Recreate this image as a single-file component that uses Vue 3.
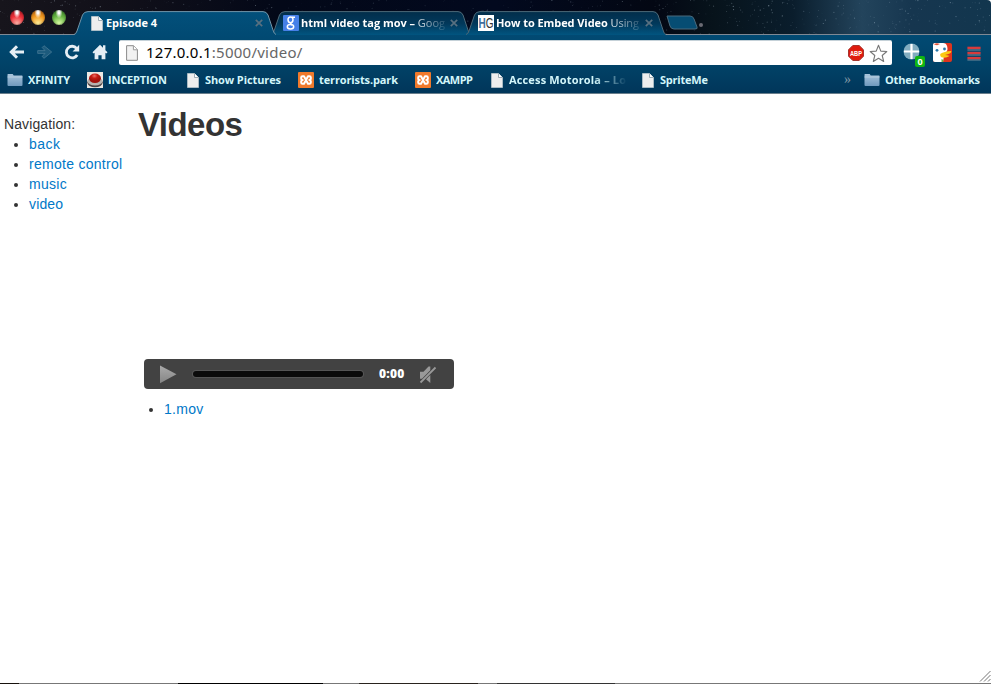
<script setup>
const tabs = [
  { title: 'Episode 4', icon: 'page', width: 202, kind: 'active', text: 51, box: 149 },
  { title: 'html video tag mov –', rest: ' Goog', icon: 'google', width: 200, kind: 'google', text: 144, box: 146 },
  { title: 'How to Embed Video', rest: ' Using', icon: 'hg', width: 200, kind: 'embed', text: 143, box: 146 },
]
const bookmarks = [
  { label: 'XFINITY', icon: 'folder', width: 79, gap: 5, text: 43 },
  { label: 'INCEPTION', icon: 'button', width: 101, gap: 5, text: 60 },
  { label: 'Show Pictures', icon: 'page', width: 110, gap: 6, text: 77 },
  { label: 'terrorists.park', icon: 'xampp', width: 117, gap: 5, text: 80 },
  { label: 'XAMPP', icon: 'xampp', width: 77, gap: 5, text: 38 },
  { label: 'Access Motorola – Lo', icon: 'page', width: 151, gap: 6, text: 118, fade: true },
  { label: 'SpriteMe', icon: 'page', width: 80, gap: 6, text: 49 },
]
const links = [
  { label: 'back', spacing: 'wide' },
  { label: 'remote control', spacing: 'loose' },
  { label: 'music', spacing: 'loose' },
  { label: 'video', spacing: 'tight' },
]

let seed = 71
function random() {
  seed = (seed * 16807) % 2147483647
  return seed / 2147483647
}
const stars = Array.from({ length: 620 }, () => ({
  x: random() * 991,
  y: random() * 34,
  r: 0.25 + random() * 0.4,
  o: 0.08 + random() * 0.35,
}))
</script>

<template>
  <div class="window">
    <svg class="defs" width="0" height="0">
      <defs>
        <linearGradient id="tabOn" x1="0" y1="0" x2="0" y2="1"><stop offset="0" stop-color="#02507b" /><stop offset="1" stop-color="#014a73" /></linearGradient>
        <linearGradient id="tabOff" x1="0" y1="0" x2="0" y2="1"><stop offset="0" stop-color="#022e4b" /><stop offset=".5" stop-color="#02385a" /><stop offset="1" stop-color="#015580" /></linearGradient>
        <linearGradient id="folder" x1="0" y1="0" x2="0" y2="1"><stop offset="0" stop-color="#a9c5dc" /><stop offset="1" stop-color="#7099bd" /></linearGradient>
        <linearGradient id="play" x1="0" y1="0" x2="0" y2="1"><stop offset="0" stop-color="#aaa" /><stop offset="1" stop-color="#858585" /></linearGradient>
        <radialGradient id="redButton" cx=".45" cy=".25"><stop offset="0" stop-color="#ef7166" /><stop offset=".5" stop-color="#c51b12" /><stop offset="1" stop-color="#a3110c" /></radialGradient>
        <symbol id="i-page" viewBox="0 0 12 15"><path d="M.5.5h7l4 4v10H.5z" fill="#eee" stroke="#b9c5cc" stroke-width=".8" /><path d="M7.5.5v4h4" fill="#fff" stroke="#8899a3" stroke-width=".8" /></symbol>
        <symbol id="i-folder" viewBox="0 0 16 14"><path d="M.5 12V1.5Q.5 1 1 1h4.7l1 1.5h8.3q.5 0 .5.5v9q0 1-1 1h-13q-1 0-1-1z" fill="url(#folder)" /><path d="M.5 4h15" stroke="#bfd4e3" stroke-width=".8" /></symbol>
        <symbol id="i-xampp" viewBox="0 0 16 16"><rect width="16" height="16" rx="1" fill="#f07a2c" /><path d="M4.5 4.300H6L10 11.700h1.500q1.300 0 1.300-1.300V9.500Q12.800 8 11.300 8q1.500 0 1.500-1.500v-.9q0-1.300-1.300-1.300H10L6 11.700H4.500q-1.300 0-1.300-1.300V9.500Q3.200 8 4.700 8 3.200 8 3.200 6.500v-.9q0-1.300 1.300-1.300z" fill="none" stroke="#fff" stroke-width="2" stroke-linejoin="round" /></symbol>
        <symbol id="i-button" viewBox="0 0 16 16"><rect width="16" height="16" fill="#ece8e3" /><ellipse cx="8" cy="10.500" rx="7.700" ry="4.800" fill="#4e4141" /><ellipse cx="8" cy="9.200" rx="7.500" ry="4.300" fill="#b7b2af" /><ellipse cx="8" cy="6.300" rx="6" ry="4.800" fill="url(#redButton)" /></symbol>
        <symbol id="i-close" viewBox="0 0 8 8"><path d="m.8.8 6.400 6.400m0-6.400L.8 7.200" stroke="#587080" stroke-width="1.700" /></symbol>
      </defs>
    </svg>

    <header class="strip">
      <svg class="sky" width="991" height="35" viewBox="0 0 991 35">
        <circle v-for="(s, i) in stars" :key="i" :cx="s.x" :cy="s.y" :r="s.r" fill="#c6d8e6" :opacity="s.o" />
        <circle cx="701" cy="25" r="2" fill="#95929a" opacity=".7" />
      </svg>
      <div class="lights"><i class="red" /><i class="amber" /><i class="green" /></div>
      <nav class="tabs">
        <div v-for="t in tabs" :key="t.title" class="tab" :class="t.kind" :style="{ width: t.width + 'px' }">
          <svg class="shape" :width="t.width" height="24" :viewBox="`0 0 ${t.width} 24`">
            <path :d="`M0 24Q2 23 3 20L8.5 4Q10 .6 14 .6H${t.width - 13}Q${t.width - 9.5} .6 ${t.width - 8} 4L${t.width - 3} 19Q${t.width - 2} 23 ${t.width} 24z`" :fill="t.kind === 'active' ? 'url(#tabOn)' : 'url(#tabOff)'" />
            <path :d="`M0 23.5Q2 23 3 20L8.5 4Q10 .6 14 .6H${t.width - 13}Q${t.width - 9.5} .6 ${t.width - 8} 4L${t.width - 3} 19Q${t.width - 2} 23 ${t.width} 23.5`" fill="none" :stroke="t.kind === 'active' ? '#7194a8' : '#4d6978'" />
          </svg>
          <svg v-if="t.icon === 'page'" class="favicon" width="12" height="15"><use href="#i-page" /></svg>
          <svg v-else-if="t.icon === 'google'" class="favicon" width="16" height="16" viewBox="0 0 16 16"><rect width="16" height="16" rx="1" fill="#4580e8" /><g fill="none" stroke="#fff" stroke-width="1.500"><ellipse cx="7.500" cy="4.800" rx="2.500" ry="2.900" /><path d="M9 2.200h3M8.500 7.500q-2 1.200.5 2.500" /><ellipse cx="7.500" cy="11.800" rx="3.200" ry="2.200" /></g></svg>
          <svg v-else class="favicon hg" width="16" height="16"><rect width="16" height="16" fill="#fff" /><text x=".5" y="13" textLength="15" lengthAdjust="spacingAndGlyphs"><tspan class="h">H</tspan>G</text></svg>
          <svg class="title" :width="t.box" height="16"><text x="0" y="12" :textLength="t.text">{{ t.title }}<tspan v-if="t.rest" class="rest">{{ t.rest }}</tspan></text></svg>
          <svg class="close" width="8" height="8"><use href="#i-close" /></svg>
        </div>
        <svg class="newtab" width="33" height="16" viewBox="0 0 33 16"><path d="M1 1h23q3 0 4 3l3 8q1 2-2 2H8q-3 0-4-3z" fill="#064d73" stroke="#4b6b7d" /></svg>
      </nav>
    </header>

    <section class="toolbar">
      <svg class="nav-icon back" width="16" height="16" viewBox="0 0 16 16"><path d="M15 8H3M8 2.300 2.300 8 8 13.700" fill="none" stroke="#e6eef4" stroke-width="3" /></svg>
      <svg class="nav-icon back" width="16" height="16" viewBox="0 0 16 16"><path d="M.7 6.600H8L5.200 3.500 7 1.700 14.700 8 7 14.300l-1.800-1.800L8 9.400H.7z" fill="#1d5b7d" stroke="#477a96" stroke-width=".8" /></svg>
      <svg class="nav-icon" width="16" height="16" viewBox="0 0 16 16"><path d="M12.600 4.300A5.800 5.800 0 1 0 13.200 11" fill="none" stroke="#e6eef4" stroke-width="2.800" /><path d="M15.200.8v6.600H8.600z" fill="#e6eef4" /></svg>
      <svg class="nav-icon" width="16" height="16" viewBox="0 0 16 16"><path d="M.5 8.300 8 .8l3 3V1.200h2.400v5l2.100 2.100-1.200 1.200-.9-.8v6.600H9.600v-4H6.400v4H2.600V8.700l-.9.8z" fill="#e6eef4" /></svg>
      <div class="omnibox">
        <svg width="12" height="16" viewBox="0 0 12 16"><path d="M.6.700h7l3.800 3.900v10.700H.6z" fill="#f2f2f2" stroke="#8b8b8b" /><path d="M7.400.800v4h4" fill="#fff" stroke="#9b9b9b" /></svg>
        <span class="url"><b>127.0.0.1</b>:5000/video/</span>
        <svg class="abp" width="16" height="16" viewBox="0 0 16 16"><path d="M4.800.5h6.400l4.300 4.300v6.400l-4.300 4.300H4.800L.5 11.200V4.800z" fill="#df1b0e" stroke="#a6362e" /><text x="2" y="11" textLength="12" lengthAdjust="spacingAndGlyphs">ABP</text></svg>
        <svg class="star" width="19" height="19" viewBox="0 0 19 19"><path d="m9.500 1.300 2.300 5.800 6 .4-4.600 4 1.500 6-5.200-3.300-5.200 3.300 1.500-6-4.600-4 6-.4z" fill="#fff" stroke="#777" stroke-width="1.100" stroke-linejoin="round" /></svg>
      </div>
      <div class="plus">
        <svg width="17" height="17" viewBox="0 0 17 17"><circle cx="8.500" cy="8.500" r="8" fill="#82adc0" /><path d="M8.500 1v15M1 8.500h15" stroke="#fff" stroke-width="2.200" /></svg>
        <span class="badge">0</span>
      </div>
      <svg class="duck" width="19" height="19" viewBox="0 0 19 19"><rect width="19" height="19" rx="2" fill="#df341e" /><path d="M0 2Q0 0 2 0h8c3.500 0 4.500 3 4.500 6 0 3-3 4-3.500 7l-1 6H2q-2 0-2-2z" fill="#fff" /><path d="M1 1.500Q3-.5 7 1L4 2.200z" fill="#e45437" /><circle cx="4" cy="7.300" r="1.400" fill="#2878aa" /><circle cx="11.500" cy="6" r="1.400" fill="#2878aa" /><path d="M7.500 10.800Q11 8.500 18 8q1.500 2-6 4 4.500.2 4.500 1-4 2.500-8 1.200-2-1.500-1-3.400" fill="#fbc912" /><path d="m8.500 16 2 1-.5 2H8.500z" fill="#70b644" /></svg>
      <svg class="menu" width="14" height="15" viewBox="0 0 14 15"><g fill="#d63b3c"><rect x=".4" y=".7" width="13.200" height="2.400" /><rect x=".4" y="5.800" width="13.200" height="2.400" /><rect x=".4" y="10.900" width="13.200" height="2.400" /></g><path d="M.4 4h13.200M.4 9h13.200M.4 14h13.200" stroke="#8f9ca5" stroke-width=".8" /></svg>
    </section>

    <section class="bookmarks">
      <div v-for="b in bookmarks" :key="b.label" class="bookmark" :class="b.icon" :style="{ width: b.width + 'px', gap: b.gap + 'px' }">
        <svg :width="b.icon === 'page' ? 12 : 16" :height="b.icon === 'page' ? 15 : b.icon === 'folder' ? 14 : 16"><use :href="'#i-' + b.icon" /></svg>
        <svg class="label" :class="{ fade: b.fade }" :width="b.text" height="16"><text x="0" y="12" :textLength="b.text - 1">{{ b.label }}</text></svg>
      </div>
      <span class="more">»</span>
      <div class="bookmark other">
        <svg width="16" height="14"><use href="#i-folder" /></svg>
        <svg class="label" width="97" height="16"><text x="0" y="12" textLength="95">Other Bookmarks</text></svg>
      </div>
    </section>

    <main class="page-body">
      <aside class="side">
        <span class="nav-title">Navigation:</span>
        <ul><li v-for="l in links" :key="l.label"><a :class="l.spacing">{{ l.label }}</a></li></ul>
      </aside>
      <article class="content">
        <h1>Videos</h1>
        <div class="player">
          <svg width="18" height="19" viewBox="0 0 18 19"><path d="M1 .500 17.500 9.300 1 18.300z" fill="url(#play)" /></svg>
          <span class="track" />
          <span class="time">0:00</span>
          <svg width="18" height="19" viewBox="0 0 18 19"><path d="M1 6.800h3.500L9.500 1.500h1.800v3.700L3 13.800H1zM7 14.300l4.300-4.300v8z" fill="#999" /><path d="m1.500 17.500 15-15" stroke="#999" stroke-width="1.800" /></svg>
        </div>
        <ul class="files"><li><a class="loose">1.mov</a></li></ul>
      </article>
      <svg class="grip" width="12" height="12" viewBox="0 0 12 12"><path d="M1 11.500 11.500 1M5 11.500 11.500 5M9 11.500 11.500 9" stroke="#777" /></svg>
    </main>
    <footer class="edge" />
  </div>
</template>

<style>
body { margin: 0; overflow: hidden; background: #fff; }
</style>
<style scoped>
.window { width: 991px; height: 684px; display: flex; flex-direction: column; overflow: hidden; background: #fff; }
.defs { position: absolute; }
.strip { position: relative; height: 35px; box-sizing: border-box; display: flex; background: linear-gradient(90deg, #17151c 0, #111019 12%, #030818 28%, #02091e 50%, #030713 66%, #07131b 72%, #0a1d2c 80%, #23445c 87%, #16364f 92%, #12364e 100%); border-bottom: 1px solid #7f8994; border-top-right-radius: 4px; }
.sky { position: absolute; left: 0; top: 0; }
.lights { position: relative; display: flex; gap: 7px; padding: 10px 0 0 10px; width: 64px; height: 14px; }
.lights i { width: 14px; height: 15px; flex: none; border-radius: 50%; box-shadow: inset 0 0 2px #2229; }
.red { background: radial-gradient(ellipse at 50% 12%, #fff 0 10%, transparent 35%), radial-gradient(circle at 50% 90%, #ffb2a8, #ee3039 50%, #9c131c); }
.amber { background: radial-gradient(ellipse at 50% 12%, #fff 0 10%, transparent 35%), radial-gradient(circle at 50% 90%, #fff09c, #f29a21 50%, #a45108); }
.green { background: radial-gradient(ellipse at 50% 12%, #fff 0 10%, transparent 35%), radial-gradient(circle at 50% 90%, #ddffa7, #68b544 50%, #286b1c); }
.tabs { position: relative; display: flex; padding-top: 11px; }
.tab { position: relative; height: 24px; display: flex; align-items: center; flex: none; box-sizing: border-box; padding-left: 17px; }
.tab + .tab { margin-left: -5px; padding-left: 12px; }
.active { z-index: 3; }
.shape { position: absolute; left: 0; top: 0; }
.favicon { position: relative; flex: none; }
.hg text { fill: #333; font: 14px "Liberation Sans", sans-serif; }
.hg .h { fill: #3e6f9f; font-weight: bold; }
.title { position: relative; margin-left: 3px; flex: none; }
.title text { fill: #fff; font: 700 11px "Open Sans", sans-serif; }
.title .rest { font-weight: 400; }
.google .title, .embed .title { margin-left: 2px; mask-image: linear-gradient(90deg, #000 76%, transparent 102%); }
.close { position: relative; margin-left: 0; }
.google .close, .embed .close { margin-left: 3px; }
.newtab { margin: 4px 0 0 0; }
.toolbar { height: 31px; flex: none; box-sizing: border-box; padding: 5px 10px 0 8px; display: flex; background: linear-gradient(#014a73, #014267); }
.nav-icon { margin-top: 4px; margin-right: 12px; flex: none; }
.back { position: relative; left: 1px; }
.omnibox { display: flex; align-items: center; box-sizing: border-box; width: 773px; height: 25px; margin-left: -1px; padding-left: 7px; background: #fff; border-radius: 2px; border-top: 1px solid #c5d1d8; }
.url { margin-left: 8px; flex: 1; font: 15px/20px "Noto Sans", sans-serif; color: #666; letter-spacing: .25px; padding-bottom: 2px; }
.url b { color: #000; font-weight: 400; }
.abp text { fill: #fff; font: bold 8px "Liberation Sans", sans-serif; }
.star { margin: 0 4px 0 5px; }
.plus { position: relative; width: 29px; margin: 3px 0 0 11px; flex: none; }
.badge { position: absolute; left: 12px; top: 13px; width: 10px; height: 11px; background: #10b513; border-radius: 2px; color: #fff; font: bold 9px/11px "Open Sans", sans-serif; text-align: center; }
.duck { margin: 3px 0 0 1px; flex: none; }
.menu { margin: 6px 0 0 15px; flex: none; }
.bookmarks { height: 28px; flex: none; box-sizing: border-box; border-bottom: 1px solid #697e8c; padding-left: 7px; display: flex; background: linear-gradient(#014267, #01365a); }
.bookmark { display: flex; align-items: center; height: 28px; flex: none; }
.bookmark.button, .bookmark.xampp { position: relative; left: 1px; }
.bookmark > svg { flex: none; }
.label text { fill: #d3f6fa; font: 700 11px "Open Sans", sans-serif; }
.fade { mask-image: linear-gradient(90deg, #000 72%, transparent 100%); }
.more { margin-left: 122px; width: 20px; flex: none; font: 14px/27px "Liberation Serif", serif; color: #8298a5; }
.other { gap: 5px; }
.page-body { position: relative; display: flex; flex: 1; font: 14px/20px "Liberation Sans", Arial, sans-serif; color: #333; }
.side { width: 134px; padding: 20px 0 0 4px; box-sizing: border-box; }
.nav-title { letter-spacing: .1px; }
ul { margin: 0; padding: 0 0 0 25px; }
a { color: #0078c8; }
.wide { letter-spacing: .5px; }
.loose { letter-spacing: .28px; }
.tight { letter-spacing: .15px; }
.content { padding: 10px 0 0 4px; }
h1 { margin: 0; font-size: 33px; line-height: 42px; color: #333; letter-spacing: -.55px; }
.player { width: 310px; height: 30px; box-sizing: border-box; display: flex; align-items: center; margin: 213px 0 10px 6px; padding-left: 15px; background: #424242; border-radius: 4px; }
.files { padding-left: 26px; }
.track { width: 170px; height: 6px; margin-left: 16px; border-radius: 4px; background: #0b0b0b; box-shadow: 0 0 0 1px #555; }
.time { width: 27px; margin: 0 13px 0 16px; color: #fff; font: 800 12px/16px "Open Sans", sans-serif; letter-spacing: .2px; }
.edge { height: 1px; background: linear-gradient(90deg, #17120d 0 19px, #777 19px 178px, #000 178px 323px, #777 323px 359px, #29231e 359px 478px, #777 478px 497px, #333 497px 615px, #777 615px); }
.grip { position: absolute; right: 0; bottom: 1px; }
</style>
